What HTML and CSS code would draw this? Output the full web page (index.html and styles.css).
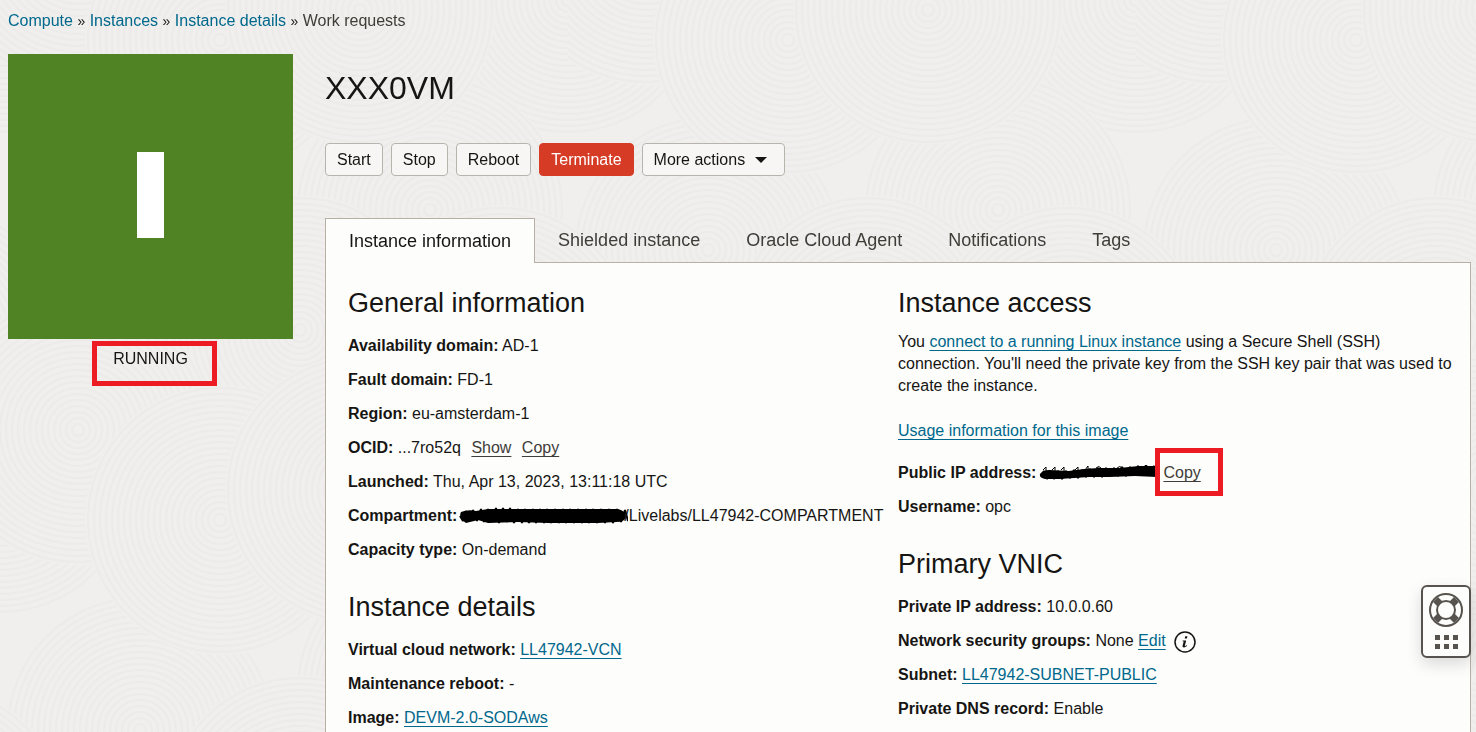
FILE: index.html
```html
<!DOCTYPE html>
<html lang="en">
<head>
<meta charset="utf-8">
<title>Instance details</title>
<link rel="stylesheet" href="styles.css">
</head>
<body>
<svg class="backdrop" viewBox="0 0 1476 732" preserveAspectRatio="xMinYMin slice" aria-hidden="true">
  <defs>
    <g id="disc">
      <circle class="disc-fill" r="135"/>
      <g class="disc-rings">
        <circle r="6"/><circle r="12"/><circle r="18"/><circle r="24"/><circle r="30"/><circle r="36"/><circle r="42"/><circle r="48"/><circle r="54"/><circle r="60"/><circle r="66"/><circle r="72"/><circle r="78"/><circle r="84"/><circle r="90"/><circle r="96"/><circle r="102"/><circle r="108"/><circle r="114"/><circle r="120"/><circle r="126"/><circle r="132"/>
      </g>
    </g>
    <pattern id="swirls" width="568" height="480" patternUnits="userSpaceOnUse">
      <use href="#disc" x="0" y="0"/><use href="#disc" x="568" y="0"/><use href="#disc" x="0" y="480"/><use href="#disc" x="568" y="480"/>
      <use href="#disc" x="430" y="210"/><use href="#disc" x="-138" y="210"/>
      <use href="#disc" x="140" y="250"/><use href="#disc" x="300" y="330"/>
      <use href="#disc" x="500" y="340"/><use href="#disc" x="-68" y="340"/>
      <use href="#disc" x="78" y="430"/><use href="#disc" x="78" y="-50"/>
      <use href="#disc" x="220" y="40"/><use href="#disc" x="220" y="520"/>
      <use href="#disc" x="360" y="10"/><use href="#disc" x="360" y="490"/>
    </pattern>
  </defs>
  <rect width="1476" height="732" fill="url(#swirls)"/>
</svg>

<div class="page">
  <nav class="breadcrumb" aria-label="Breadcrumb">
    <a href="#">Compute</a> <span class="sep">»</span>
    <a href="#">Instances</a> <span class="sep">»</span>
    <a href="#">Instance details</a> <span class="sep">»</span>
    <span>Work requests</span>
  </nav>

  <div class="layout">
    <aside class="status">
      <div class="status-tile"><span class="status-bar"></span></div>
      <p class="status-text"><span class="status-label">RUNNING<span class="mark mark-status"></span></span></p>
    </aside>

    <main class="main">
      <h1 class="title">XXX0VM</h1>
      <div class="actions">
        <button class="btn" type="button">Start</button>
        <button class="btn" type="button">Stop</button>
        <button class="btn" type="button">Reboot</button>
        <button class="btn btn-danger" type="button">Terminate</button>
        <button class="btn btn-menu" type="button">More actions
          <svg class="caret" viewBox="0 0 12 6" aria-hidden="true"><path d="M0 0h12L6 6z"/></svg>
        </button>
      </div>

      <div class="tabs" role="tablist">
        <button class="tab tab-active" type="button" role="tab" aria-selected="true">Instance information</button>
        <button class="tab" type="button" role="tab">Shielded instance</button>
        <button class="tab" type="button" role="tab">Oracle Cloud Agent</button>
        <button class="tab" type="button" role="tab">Notifications</button>
        <button class="tab" type="button" role="tab">Tags</button>
      </div>

      <div class="panel" role="tabpanel">
        <div class="column">
          <section class="group">
            <h2 class="heading">General information</h2>
            <p class="row"><b>Availability domain:</b> AD-1</p>
            <p class="row"><b>Fault domain:</b> FD-1</p>
            <p class="row"><b>Region:</b> eu-amsterdam-1</p>
            <p class="row"><b>OCID:</b> ...7ro52q <a class="link-quiet" href="#">Show</a> <a class="link-quiet" href="#">Copy</a></p>
            <p class="row"><b>Launched:</b> Thu, Apr 13, 2023, 13:11:18 UTC</p>
            <p class="row row-compartment"><b>Compartment:</b><svg class="scribble" viewBox="0 0 170 18" aria-hidden="true">
              <path d="M3 5Q10 2 18 4L30 2H160Q168 4 168 10Q167 15 158 15L140 16H90L60 15L30 16L20 13L8 16Q0 11 3 5z"/>
              <path class="scribble-edge" d="M2 9l3 5 3-10 4 10 3-11 4 11 4-12 3 13 4-13 4 13 4-14 3 15 4-15 4 14 3-14 4 15 4-14 4 14 3-14 4 14 4-14 3 14 4-14 4 14 3-14 4 14 4-14 4 14 4-14 3 14 4-14 4 14 4-14 4 14 4-14 3 14 4-14 4 14 4-14 4 14 4-14 4 14 4-14 4 13 4-12 3 11 3-8"/>
            </svg>/Livelabs/LL47942-COMPARTMENT</p>
            <p class="row"><b>Capacity type:</b> On-demand</p>
          </section>
          <section class="group">
            <h2 class="heading">Instance details</h2>
            <p class="row"><b>Virtual cloud network:</b> <a href="#">LL47942-VCN</a></p>
            <p class="row"><b>Maintenance reboot:</b> -</p>
            <p class="row"><b>Image:</b> <a href="#">DEVM-2.0-SODAws</a></p>
          </section>
        </div>

        <div class="column">
          <section class="group">
            <h2 class="heading heading-tight">Instance access</h2>
            <p class="intro">You <a href="#">connect to a running Linux instance</a> using a Secure Shell (SSH) connection. You'll need the private key from the SSH key pair that was used to create the instance.</p>
            <p class="usage"><a href="#">Usage information for this image</a></p>
            <div class="row row-ip"><b>Public IP address:</b>
              <svg class="scribble scribble-ip" viewBox="0 0 118 16" aria-hidden="true">
                <path d="M1 9Q4 5 10 5L30 6L45 4L60 3L80 3L100 1H118V12L96 11L70 12L50 12L35 13L20 14L6 14Q0 13 1 9z"/>
                <path class="scribble-edge" d="M2 11l3-5 3 8 4-8 3 8 4-8 4 8 4-8 4 7 4-8 4 8 4-8 4 7 4-8 4 8 4-9 4 9 4-9 4 8 4-8 4 8 4-9 4 9 4-9 4 8 4-9 4 9 4-10 4 10 4-9 3 8"/>
                <path class="scribble-digits" d="M4 5l3-3v4M13 5l3-3v4M22 5l3-3v4M36 5l3-3v4M46 5l3-4v4M57 3q3-3 5 0M78 3q3-3 5 0"/>
              </svg>
              <span class="copy-wrap"><a class="link-quiet" href="#">Copy</a><span class="mark mark-copy"></span></span>
            </div>
            <p class="row"><b>Username:</b> opc</p>
          </section>
          <section class="group">
            <h2 class="heading">Primary VNIC</h2>
            <p class="row"><b>Private IP address:</b> 10.0.0.60</p>
            <p class="row"><b>Network security groups:</b> None <a href="#">Edit</a>
              <svg class="info" viewBox="0 0 22 22" role="img" aria-label="Information"><circle cx="11" cy="11" r="10"/><path class="info-dot" d="M11.2 5.2h2.2l-.5 2.2h-2.2z"/><path class="info-stem" d="M8.8 9.600h3.400l-1.400 5.200c-.1.600.3.500.7.200l1-.9.5.5c-1 1.400-2 1.900-3 1.900-1.200 0-1.700-.7-1.400-1.900l1.100-4.100-1.200-.2z"/></svg></p>
            <p class="row"><b>Subnet:</b> <a href="#">LL47942-SUBNET-PUBLIC</a></p>
            <p class="row"><b>Private DNS record:</b> Enable</p>
          </section>
        </div>
      </div>
    </main>
  </div>
</div>

<button class="help" type="button" aria-label="Help">
  <svg class="help-ring" viewBox="0 0 34 34" aria-hidden="true">
    <path class="ring-bands" d="M6.500 6.500l4.500 4.500M27.500 6.500l-4.500 4.500M6.500 27.500l4.500-4.500M27.500 27.500l-4.500-4.500"/>
    <circle class="ring-line" cx="17" cy="17" r="16"/>
    <circle class="ring-line ring-hole" cx="17" cy="17" r="9"/>
  </svg>
  <svg class="help-dots" viewBox="0 0 23 14" aria-hidden="true"><path d="M0 0h5v5H0zM9 0h5v5H9zM18 0h5v5h-5zM0 9h5v5H0zM9 9h5v5H9zM18 9h5v5h-5z"/></svg>
</button>
</body>
</html>
```

FILE: styles.css
```css
* { box-sizing: border-box; }

body {
  margin: 0;
  background: #f0efed;
  color: #161513;
  font: 16px/22px "Liberation Sans", Arial, sans-serif;
}

h1, h2, p { margin: 0; font-weight: 400; }
a { color: #00688c; text-underline-offset: 3px; }
button { font: inherit; color: inherit; cursor: pointer; }

.backdrop { position: fixed; inset: 0; width: 100%; height: 100%; z-index: -1; }
.disc-fill { fill: #f0efed; }
.disc-rings { fill: none; stroke: #ecebe9; stroke-width: 2; }

.page {
  display: flex;
  flex-direction: column;
  min-height: 100vh;
  padding: 10px 5px 0 8px;
}

.breadcrumb { margin-bottom: 22px; color: #403c38; }
.breadcrumb a { text-decoration: none; }
.sep { color: #161513; font-size: 14px; }

.layout { display: flex; flex: 1; gap: 32px; }

.status { flex: 0 0 285px; }
.status-tile {
  display: flex;
  align-items: center;
  justify-content: center;
  aspect-ratio: 1;
  padding-bottom: 4px;
  background: #4f8323;
}
.status-bar { width: 27px; height: 86px; background: #fff; }
.status-text { padding-top: 9px; text-align: center; }
.status-label { position: relative; }

.mark { position: absolute; border: 5px solid #ed1c24; pointer-events: none; }
.mark-status { inset: -9px -29px -19px -21px; }
.mark-copy { inset: -14px -22px -12px -8px; }

.main { display: flex; flex: 1; flex-direction: column; min-width: 0; }
.title { padding: 14px 0 35px; font-size: 32px; line-height: 40px; }

.actions { display: flex; flex-wrap: wrap; gap: 8px; margin-bottom: 42px; }
.btn {
  padding: 5px 11px;
  border: 1px solid #b8b4ad;
  border-radius: 4px;
  background: #f7f6f5;
  line-height: 21px;
}
.btn-danger { border-color: #d63b25; background: #d63b25; color: #fff; }
.btn-menu { display: flex; align-items: center; gap: 10px; padding-right: 17px; }
.caret { width: 12px; height: 6px; fill: #161513; }

.tabs { display: flex; position: relative; margin-bottom: -1px; font-size: 18px; }
.tab {
  padding: 10px 22px 11px;
  border: 1px solid transparent;
  border-bottom: 0;
  background: none;
  color: #403c38;
  line-height: 23px;
}
.tab-active {
  padding: 11px 23px 10px;
  border-color: #b8b0a5;
  background: #fdfdfb;
  color: #161513;
}

.panel {
  display: grid;
  flex: 1;
  grid-template-columns: 1fr 1fr;
  padding: 24px 22px 0;
  border: 1px solid #b8b0a5;
  border-bottom: 0;
  background: #fdfdfb;
}

.group { margin-bottom: 30px; }
.group:last-child { margin-bottom: 0; }
.heading { margin-bottom: 16px; font-size: 27px; line-height: 32px; }
.heading-tight { margin-bottom: 12px; }
.row { height: 22px; margin-bottom: 12px; white-space: nowrap; }
.row:last-child { margin-bottom: 0; }
.intro { margin: 0 -16px 23px 0; }
.usage { margin-bottom: 20px; }

.link-quiet { color: #403c38; }
.row > .link-quiet { margin-left: 6px; }
.row-compartment, .row-ip { display: flex; align-items: center; }
.row-ip { gap: 3px; }
.scribble { width: 170px; height: 18px; margin: 0 -4px 0 1px; fill: #000; }
.scribble-ip { width: 118px; height: 16px; margin: 0; }
.scribble-edge { fill: none; stroke: #000; stroke-width: 2; stroke-linejoin: bevel; }
.scribble-digits { fill: none; stroke: #000; }
.copy-wrap { position: relative; margin-left: 3px; }

.info { width: 22px; height: 22px; margin-left: 4px; vertical-align: -7px; fill: none; stroke: #161513; stroke-width: 1.5; }
.info-dot, .info-stem { fill: #161513; stroke: none; }

.help {
  position: fixed;
  right: 5px;
  bottom: 74px;
  display: flex;
  flex-direction: column;
  align-items: center;
  gap: 8px;
  padding: 6px 6px 7px;
  border: 2px solid #57534e;
  border-radius: 6px;
  background: #fdfdfb;
  box-shadow: 0 6px 16px rgba(0, 0, 0, 0.14);
}
.help-ring { width: 34px; height: 34px; }
.ring-line { fill: none; stroke: #57534e; stroke-width: 2; }
.ring-hole { fill: #fdfdfb; }
.ring-bands { fill: none; stroke: #57534e; stroke-width: 7; }
.help-dots { width: 23px; height: 14px; fill: #57534e; }
```
